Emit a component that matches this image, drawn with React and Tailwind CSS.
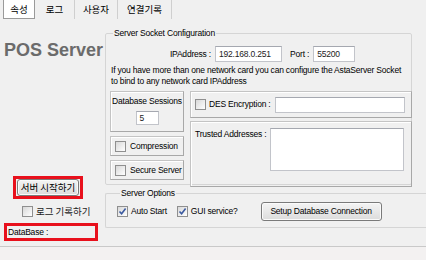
import React from 'react';

const Check = ({ checked }) => (
  <span className="w-[11px] h-[11px] shrink-0 border border-[#8f8f8f] bg-linear-to-br from-[#d8d8d8] to-white flex items-center justify-center">
    {checked && (
      <svg width="9" height="9" viewBox="0 0 9 9">
        <path d="M1.5 4.5 L3.6 6.8 L7.6 1.6" fill="none" stroke="#3b5aa0" strokeWidth="1.6" />
      </svg>
    )}
  </span>
);

const Panel = ({ className = '', children }) => (
  <div className={`border border-[#c4c4c4] border-b-[#a8a8a8] border-r-[#a8a8a8] shadow-[inset_1px_1px_0_#fff] ${className}`}>
    {children}
  </div>
);

const Input = ({ className = '', value }) => (
  <div className={`bg-white border border-[#c2c4ca] border-t-[#a5a8b0] pl-[3px] flex items-center text-[#222] ${className}`}>
    {value}
  </div>
);

const WinButton = ({ className = '', children }) => (
  <div className={`border border-[#7a7a7a] rounded-[3px] bg-linear-to-b from-[#f4f4f4] to-[#dcdcdc] shadow-[inset_0_0_0_1px_#fafafa] flex items-center justify-center ${className}`}>
    {children}
  </div>
);

const tabs = [
  { label: '속성', w: 'w-[32px]', active: true },
  { label: '로그', w: 'w-[40px]' },
  { label: '사용자', w: 'w-[43px]' },
  { label: '연결기록', w: 'w-[54px]' },
];

export default function App() {
  const kr = "font-['Noto_Sans_CJK_KR',sans-serif] tracking-normal";

  return (
    <div className="w-[426px] h-[260px] bg-[#f0f0f0] flex flex-col overflow-hidden whitespace-nowrap text-[8.5px] leading-[11px] tracking-[-0.2px] text-black font-['Liberation_Sans','Noto_Sans_CJK_KR',sans-serif]">
      {/* Tabs */}
      <div className="h-[20px] flex pl-[3px] shrink-0">
        {tabs.map((t) => (
          <div
            key={t.label}
            className={`${t.w} h-[19px] flex items-center justify-center text-[9.5px] ${kr} ${
              t.active ? 'bg-white border border-t-0 border-[#9a9a9a]' : 'border-r border-[#cfcfcf]'
            }`}
          >
            {t.label}
          </div>
        ))}
      </div>

      {/* Body */}
      <div className="flex-1 flex">
        {/* Left column */}
        <div className="w-[105px] shrink-0 flex flex-col">
          <div className="mt-[19px] ml-[4px] text-[18px] leading-[22px] tracking-normal font-bold text-[#6b6b6b] font-['Liberation_Sans',sans-serif]">
            POS Server
          </div>

          <div className="mt-[115px] ml-[13px] w-[70px] h-[23px] border-[3px] border-[#e8101c] px-[1px]">
            <WinButton className={`h-full text-[9.5px] ${kr}`}>서버 시작하기</WinButton>
          </div>

          <div className="mt-[6px] ml-[22px] flex items-center gap-[3px]">
            <Check />
            <span className={`text-[9.5px] leading-[12px] text-[#222] ${kr}`}>로그 기록하기</span>
          </div>

          <div className="mt-[6px] ml-[4px] w-[94px] h-[18px] border-[3px] border-[#e8101c] pl-[1px] flex items-center">
            DataBase :
          </div>
        </div>

        {/* Right column */}
        <div className="flex-1 flex flex-col">
          <fieldset className="mt-[8px] w-[307px] h-[157px] border border-[#d5d5d5] rounded-[2px] pl-[4px] flex flex-col">
            <legend className="ml-[3px] px-[1px]">Server Socket Configuration</legend>

            <div className="mt-[7px] flex items-center">
              <div className="w-[101px] text-right">IPAddress :</div>
              <Input className="ml-[4px] w-[67px] h-[16px]" value="192.168.0.251" />
              <div className="ml-[8px]">Port :</div>
              <Input className="ml-[4px] w-[42px] h-[16px]" value="55200" />
            </div>

            <div className="mt-[3px] pl-[1px]">
              <div>If you have more than one network card you can configure the AstaServer Socket</div>
              <div>to bind to any network card IPAddress</div>
            </div>

            <div className="mt-[4px] flex-1 flex gap-[6px]">
              <div className="w-[74px] flex flex-col gap-[4px] pb-[7px]">
                <Panel className="h-[41px] flex flex-col items-center pt-[4px]">
                  <div>Database Sessions</div>
                  <Input className="mt-[4px] w-[23px] h-[14px]" value="5" />
                </Panel>
                <Panel className="h-[20px] flex items-center gap-[4px] pl-[4px]">
                  <Check />
                  <span>Compression</span>
                </Panel>
                <Panel className="h-[20px] flex items-center gap-[4px] pl-[4px]">
                  <Check />
                  <span>Secure Server</span>
                </Panel>
              </div>

              <div className="flex-1 flex flex-col gap-[3px] mr-[-1px]">
                <Panel className="h-[27px] flex items-center pl-[4px] pr-[6px]">
                  <Check />
                  <span className="ml-[3px]">DES Encryption :</span>
                  <Input className="ml-auto w-[130px] h-[16px]" />
                </Panel>
                <Panel className="flex-1 flex pl-[4px] pr-[7px] pt-[6px] pb-[11px]">
                  <span className="mt-[1px]">Trusted Addresses :</span>
                  <Input className="ml-auto w-[134px] h-[43px]" />
                </Panel>
              </div>
            </div>
          </fieldset>

          <fieldset className="mt-[3px] h-[40px] border border-r-0 border-[#d5d5d5] rounded-l-[2px] pl-[11px] flex flex-col">
            <legend className="ml-[3px] px-[1px]">Server Options</legend>
            <div className="mt-[3px] flex items-center">
              <Check checked />
              <span className="ml-[3px]">Auto Start</span>
              <div className="ml-[10px] flex items-center">
                <Check checked />
                <span className="ml-[3px]">GUI service?</span>
              </div>
              <WinButton className="ml-[23px] w-[121px] h-[19px]">Setup Database Connection</WinButton>
            </div>
          </fieldset>
        </div>
      </div>

      {/* Status bar */}
      <div className="h-[14px] shrink-0 border-t border-[#c9c9c9] bg-[#f3f1f1]" />
    </div>
  );
}
